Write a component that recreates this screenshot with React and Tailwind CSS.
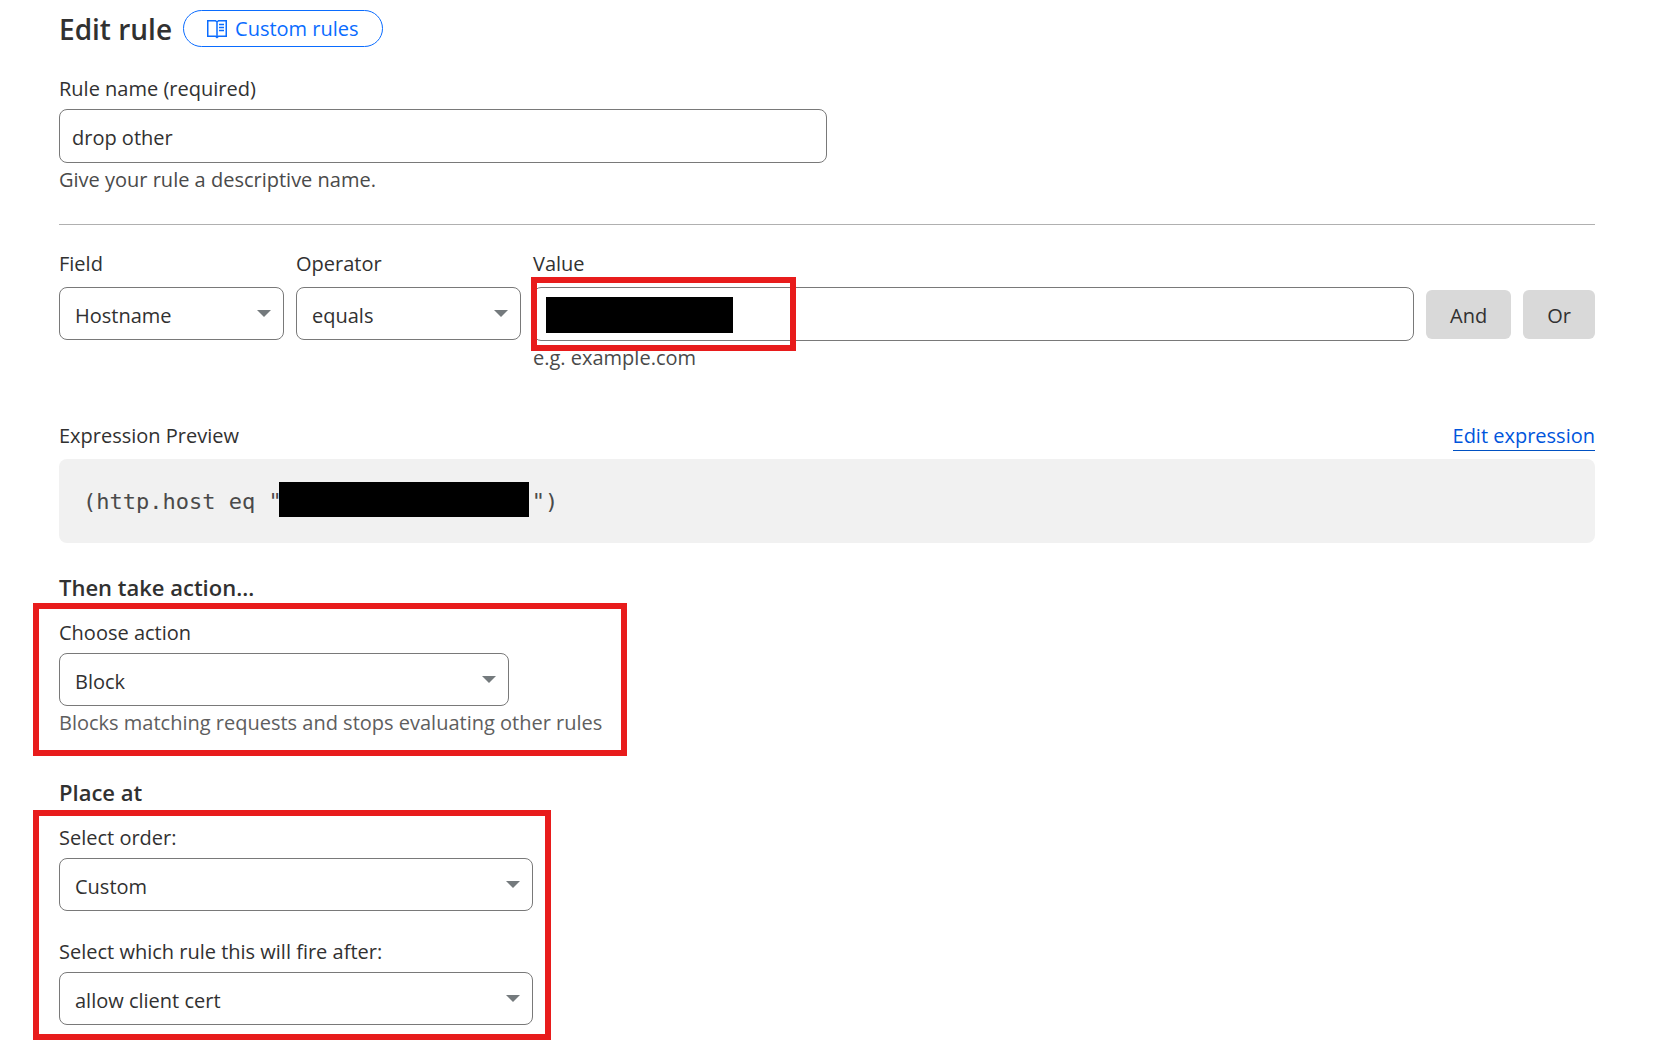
import React from "react";

const label = "block leading-7";
const help = "mt-[3px] leading-7 text-[#4a4a4a]";

function SelectBox({ id, options, className }) {
  return (
    <div className={`relative ${className || ""}`}>
      <select
        id={id}
        defaultValue={options[0]}
        className="block h-[53px] w-full appearance-none rounded-lg border border-[#797979] bg-white pt-1 pr-12 pl-[15px]"
      >
        {options.map((o) => (
          <option key={o}>{o}</option>
        ))}
      </select>
      <svg
        aria-hidden="true"
        className="pointer-events-none absolute top-[23px] right-[13px] h-[7px] w-[14px]"
        viewBox="0 0 14 7"
        fill="#747a7d"
      >
        <path d="M0 0h14L7 7z" />
      </svg>
    </div>
  );
}

function BookIcon() {
  return (
    <svg
      aria-hidden="true"
      className="h-5 w-5"
      viewBox="0 0 20 20"
      fill="none"
      stroke="currentColor"
      strokeWidth="1.5"
    >
      <path d="M10 3 8.5 1.75H.75v15.5H8.5L10 18.5l1.500-1.250h7.750V1.750H11.500L10 3v15" />
      <path d="M12 5.500h5M12 8.500h5M12 11.500h5" />
    </svg>
  );
}

export default function App() {
  return (
    <main className="min-h-screen bg-white pt-2.5 pr-[67px] pl-[59px] font-['Open_Sans','Noto_Sans',sans-serif] text-[20px] text-[#313131]">
      <header className="flex items-center gap-[11px]">
        <h1 className="text-[28px] leading-9 font-semibold">Edit rule</h1>
        <a
          href="#custom-rules"
          className="flex h-[37px] items-center gap-2 rounded-full border border-[#0a6cff] px-[23px] text-[#0a6cff]"
        >
          <BookIcon />
          Custom rules
        </a>
      </header>

      <section className="mt-7">
        <label htmlFor="rule-name" className={`${label} mb-1.5`}>
          Rule name (required)
        </label>
        <input
          id="rule-name"
          type="text"
          defaultValue="drop other"
          className="block h-[54px] w-1/2 rounded-lg border border-[#797979] bg-white px-3 pt-0.5"
        />
        <p className={help}>Give your rule a descriptive name.</p>
      </section>

      <hr className="mt-[30px] border-[#b0b0b0]" />

      <section className="mt-[25px] flex items-start gap-3">
        <div className="w-[225px]">
          <label htmlFor="field" className={`${label} mb-[9px]`}>
            Field
          </label>
          <SelectBox id="field" options={["Hostname"]} />
        </div>
        <div className="w-[225px]">
          <label htmlFor="operator" className={`${label} mb-[9px]`}>
            Operator
          </label>
          <SelectBox id="operator" options={["equals"]} />
        </div>
        <div className="flex-1">
          <label htmlFor="value" className={`${label} mb-[9px]`}>
            Value
          </label>
          <div className="relative">
            <input
              id="value"
              type="text"
              className="block h-[54px] w-full rounded-lg border border-[#797979] bg-white px-3"
            />
            <div className="pointer-events-none absolute top-2.5 left-[13px] h-9 w-[187px] bg-black" />
            <div className="pointer-events-none absolute -top-2.5 -left-0.5 h-[74px] w-[265px] border-6 border-[#e81c1c]" />
          </div>
          <p className={help}>e.g. example.com</p>
        </div>
        <button type="button" className="mt-10 h-[49px] rounded-md bg-[#d9d9d9] px-6 pt-0.5">
          And
        </button>
        <button type="button" className="mt-10 h-[49px] rounded-md bg-[#d9d9d9] px-6 pt-0.5">
          Or
        </button>
      </section>

      <section className="mt-[50px]">
        <div className="flex items-start justify-between">
          <h2 className="leading-7">Expression Preview</h2>
          <a href="#edit-expression" className="border-b border-[#0051c3] leading-7 text-[#0055dc]">
            Edit expression
          </a>
        </div>
        <div className="mt-2 flex h-[84px] items-center rounded-lg bg-[#f1f1f1] px-6 font-['DejaVu_Sans_Mono',monospace] text-[22px] text-[#4a4a4a]">
          <code className="flex items-center font-['DejaVu_Sans_Mono',monospace] whitespace-pre">
            (http.host eq "<span className="mr-[3px] mb-1 -ml-[3px] h-[35px] w-[250px] bg-black" />")
          </code>
        </div>
      </section>

      <h2 className="mt-7 text-[22px] leading-8 font-semibold">Then take action...</h2>
      <section className="-ml-[26px] w-[594px] border-6 border-[#e81c1c] px-5 pt-2.5 pb-[13px]">
        <label htmlFor="action" className={`${label} mb-1.5`}>
          Choose action
        </label>
        <SelectBox id="action" options={["Block"]} className="w-[450px]" />
        <p className="mt-[3px] leading-7 whitespace-nowrap text-[#5e5e5e]">
          Blocks matching requests and stops evaluating other rules
        </p>
      </section>

      <h2 className="mt-5 mb-0.5 text-[22px] leading-8 font-semibold">Place at</h2>
      <section className="-ml-[26px] w-[518px] border-6 border-[#e81c1c] px-5 pt-2 pb-[9px]">
        <label htmlFor="order" className={`${label} mb-1.5`}>
          Select order:
        </label>
        <SelectBox id="order" options={["Custom"]} className="w-[474px]" />
        <label htmlFor="after" className={`${label} mt-[27px] mb-1.5`}>
          Select which rule this will fire after:
        </label>
        <SelectBox id="after" options={["allow client cert"]} className="w-[474px]" />
      </section>
    </main>
  );
}
